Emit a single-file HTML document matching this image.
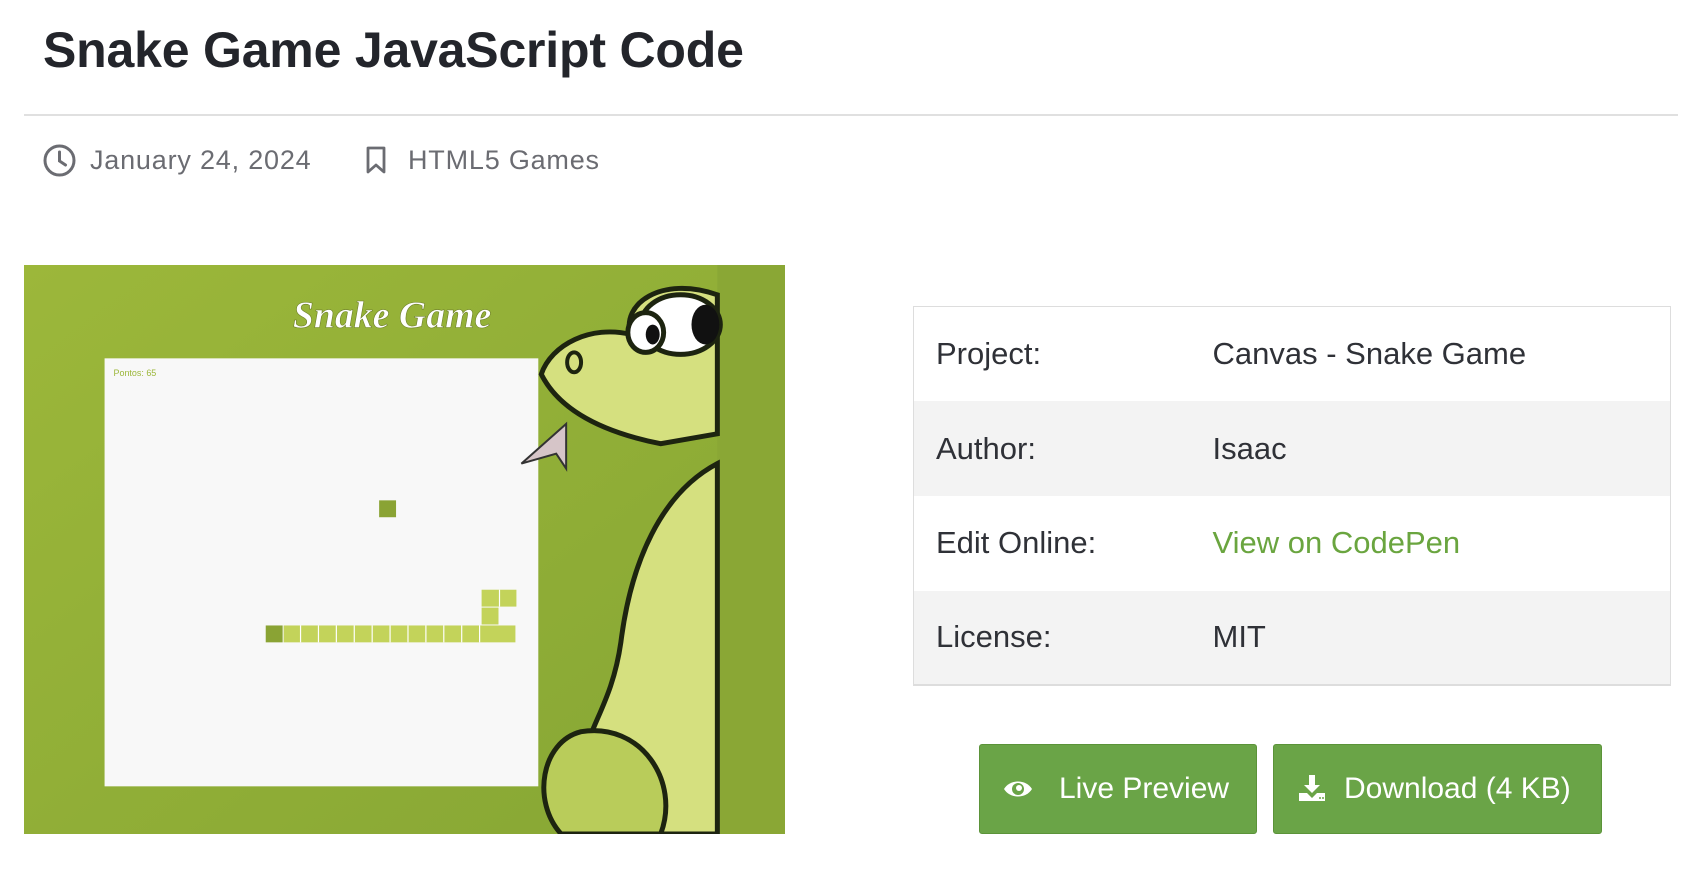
<!DOCTYPE html>
<html><head><meta charset="utf-8"><style>
*{margin:0;padding:0;box-sizing:border-box}
body{width:1694px;height:872px;background:#fff;font-family:"Liberation Sans",sans-serif;position:relative;overflow:hidden;color:#2b2d33}
.abs{position:absolute}
h1{position:absolute;left:43px;top:21px;font-size:50px;font-weight:bold;color:#23252b;letter-spacing:-0.2px;white-space:nowrap}
.hr{position:absolute;left:24px;right:16px;top:114px;height:2px;background:#e0e0e0}
.meta{position:absolute;top:145px;font-size:27px;color:#6b6c72;white-space:nowrap;letter-spacing:0.8px}
table{position:absolute;left:913px;top:306px;width:758px;border-collapse:collapse;border:1px solid #ddd;border-bottom:2px solid #ddd;font-size:31px;color:#2f3137}
td{height:94.7px;vertical-align:middle}
td.l{padding-left:22px;width:299px}
tr:nth-child(even) td{background:#f3f3f3}
.btn{position:absolute;top:744px;height:90px;background:#6aa447;border:1px solid #5b9339;border-radius:3px;color:#fff;font-size:30px;white-space:nowrap}
.btn span{position:absolute;top:27px}
</style></head><body>
<h1>Snake Game JavaScript Code</h1>
<div class="hr"></div>
<svg class="abs" style="left:43px;top:144px" width="33" height="33" viewBox="0 0 33 33"><circle cx="16.5" cy="16.5" r="14.5" fill="none" stroke="#6b6c72" stroke-width="3"/><path d="M16.5 8v9l6 4" fill="none" stroke="#6b6c72" stroke-width="3" stroke-linecap="round"/></svg>
<div class="meta" style="left:90px">January 24, 2024</div>
<svg class="abs" style="left:365px;top:146px" width="22" height="28" viewBox="0 0 22 28"><path d="M3 2h16v24l-8-7-8 7z" fill="none" stroke="#6b6c72" stroke-width="2.8" stroke-linejoin="round"/></svg>
<div class="meta" style="left:408px">HTML5 Games</div>

<svg class="abs" style="left:24px;top:265px" width="761" height="569" viewBox="0 0 765 573" preserveAspectRatio="none">
<defs><linearGradient id="g" x1="0" y1="0" x2="1" y2="1"><stop offset="0" stop-color="#9cb73a"/><stop offset="1" stop-color="#86a634"/></linearGradient></defs>
<rect width="765" height="573" fill="url(#g)"/>
<rect x="697" y="0" width="68" height="573" fill="#8aa735"/>
<rect x="81" y="94" width="436" height="431" fill="#f8f8f8"/>
<text x="90" y="112" font-size="9" fill="#9cb73a" font-family="Liberation Sans">Pontos: 65</text>
<text x="370" y="63" font-size="38" font-style="italic" font-weight="bold" fill="#fff" text-anchor="middle" font-family="Liberation Serif" stroke="#6e7f2a" stroke-width="0.6">Snake Game</text>
<rect x="357" y="237" width="17" height="17" fill="#8aa334"/>
<rect x="243" y="363" width="17" height="17" fill="#8aa334"/>
<g fill="#c3d35a">
<rect x="261" y="363" width="233" height="17"/><rect x="460" y="345" width="17" height="17"/><rect x="460" y="327" width="35" height="17"/>
</g>
<g stroke="#fff" stroke-width="1.2"><line x1="278" y1="363" x2="278" y2="380"/><line x1="296" y1="363" x2="296" y2="380"/><line x1="314" y1="363" x2="314" y2="380"/><line x1="332" y1="363" x2="332" y2="380"/><line x1="350" y1="363" x2="350" y2="380"/><line x1="368" y1="363" x2="368" y2="380"/><line x1="386" y1="363" x2="386" y2="380"/><line x1="404" y1="363" x2="404" y2="380"/><line x1="422" y1="363" x2="422" y2="380"/><line x1="440" y1="363" x2="440" y2="380"/><line x1="458" y1="363" x2="458" y2="380"/><line x1="478" y1="327" x2="478" y2="344"/></g>
<g stroke="#1d2410" stroke-width="5" fill="#d5e07f">
<path d="M697 200 C640 230 610 300 600 380 C590 450 560 470 560 520 L560 573 L697 573 Z"/>
<path d="M560 470 C520 480 510 540 540 573 L640 573 C660 520 620 460 560 470Z" fill="#b9cc5a"/>
<path d="M697 30 C640 10 600 40 610 70 C570 60 530 80 520 110 C540 150 590 170 640 180 L697 170 Z"/>
<ellipse cx="660" cy="60" rx="40" ry="30" fill="#fff"/>
<ellipse cx="685" cy="60" rx="14" ry="20" fill="#111" stroke="none"/>
<ellipse cx="625" cy="68" rx="18" ry="20" fill="#fff"/>
<ellipse cx="632" cy="70" rx="7" ry="10" fill="#111" stroke="none"/>
<ellipse cx="553" cy="98" rx="7" ry="10" fill="none" stroke-width="4"/>
</g>
<path d="M545 160 L500 200 L535 190 L545 205 Z" fill="#d6c5c8" stroke="#333" stroke-width="2"/>
</svg>

<table>
<tr><td class="l">Project:</td><td>Canvas - Snake Game</td></tr>
<tr><td class="l">Author:</td><td>Isaac</td></tr>
<tr><td class="l">Edit Online:</td><td style="color:#6aa53f">View on CodePen</td></tr>
<tr><td class="l">License:</td><td>MIT</td></tr>
</table>

<div class="btn" style="left:979px;width:278px">
<svg class="abs" style="left:22px;top:32px" width="32" height="24" viewBox="0 0 32 24"><path d="M2 12 C8 2 24 2 30 12 C24 22 8 22 2 12Z" fill="#fff"/><circle cx="16" cy="12" r="6" fill="#6aa447"/><circle cx="17" cy="11" r="3" fill="#fff"/></svg>
<span style="left:79px">Live Preview</span></div>
<div class="btn" style="left:1273px;width:329px">
<svg class="abs" style="left:23px;top:28px" width="30" height="30" viewBox="0 0 30 30"><path d="M12 2h6v10h5l-8 8-8-8h5z" fill="#fff"/><path d="M2 20h8l5 5 5-5h8v8H2z" fill="#fff"/><circle cx="23" cy="25" r="1" fill="#6aa447"/><circle cx="26" cy="25" r="1" fill="#6aa447"/></svg>
<span style="left:70px">Download (4 KB)</span></div>
</body></html>
